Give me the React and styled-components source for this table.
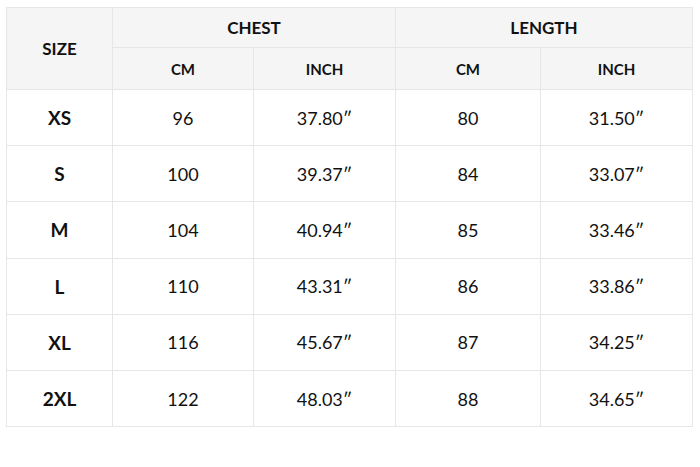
import React from "react";
import styled, { createGlobalStyle } from "styled-components";

const GlobalStyle = createGlobalStyle`
  html, body {
    margin: 0;
    padding: 0;
    background: #ffffff;
  }
  body {
    font-family: "Lato", "Open Sans", "Liberation Sans", sans-serif;
    color: #111111;
  }
`;

const rows = [
  { size: "XS", chestCm: "96", chestIn: "37.80″", lenCm: "80", lenIn: "31.50″" },
  { size: "S", chestCm: "100", chestIn: "39.37″", lenCm: "84", lenIn: "33.07″" },
  { size: "M", chestCm: "104", chestIn: "40.94″", lenCm: "85", lenIn: "33.46″" },
  { size: "L", chestCm: "110", chestIn: "43.31″", lenCm: "86", lenIn: "33.86″" },
  { size: "XL", chestCm: "116", chestIn: "45.67″", lenCm: "87", lenIn: "34.25″" },
  { size: "2XL", chestCm: "122", chestIn: "48.03″", lenCm: "88", lenIn: "34.65″" },
];

const Page = styled.div`
  padding: 7px 0 0 6px;
`;

const Table = styled.table`
  border-collapse: collapse;
  table-layout: fixed;
  width: 687px;
  border: 1px solid #e6e6e6;
`;

const HeadCell = styled.th`
  background: #f5f5f5;
  border: 1px solid #e6e6e6;
  font-weight: 700;
  font-size: ${(p) => (p.$small ? "15px" : "17px")};
  text-align: center;
  padding: 0;
  height: ${(p) => p.$h || "auto"};
  color: #111111;
`;

const SizeCell = styled.td`
  border: 1px solid #e6e6e6;
  font-weight: 700;
  font-size: 19px;
  text-align: center;
  height: 55.2px;
  padding: 0;
`;

const Cell = styled.td`
  border: 1px solid #e6e6e6;
  font-size: 18px;
  text-align: center;
  height: 55.2px;
  padding: 0;
`;

export default function App() {
  return (
    <>
      <GlobalStyle />
      <Page>
        <Table>
          <colgroup>
            <col style={{ width: 106 }} />
            <col style={{ width: 141 }} />
            <col style={{ width: 142 }} />
            <col style={{ width: 145 }} />
            <col style={{ width: 152 }} />
          </colgroup>
          <thead>
            <tr>
              <HeadCell rowSpan={2}>SIZE</HeadCell>
              <HeadCell colSpan={2} $h="39px">CHEST</HeadCell>
              <HeadCell colSpan={2} $h="39px">LENGTH</HeadCell>
            </tr>
            <tr>
              <HeadCell $small $h="41px">CM</HeadCell>
              <HeadCell $small $h="41px">INCH</HeadCell>
              <HeadCell $small $h="41px">CM</HeadCell>
              <HeadCell $small $h="41px">INCH</HeadCell>
            </tr>
          </thead>
          <tbody>
            {rows.map((r) => (
              <tr key={r.size}>
                <SizeCell>{r.size}</SizeCell>
                <Cell>{r.chestCm}</Cell>
                <Cell>{r.chestIn}</Cell>
                <Cell>{r.lenCm}</Cell>
                <Cell>{r.lenIn}</Cell>
              </tr>
            ))}
          </tbody>
        </Table>
      </Page>
    </>
  );
}
